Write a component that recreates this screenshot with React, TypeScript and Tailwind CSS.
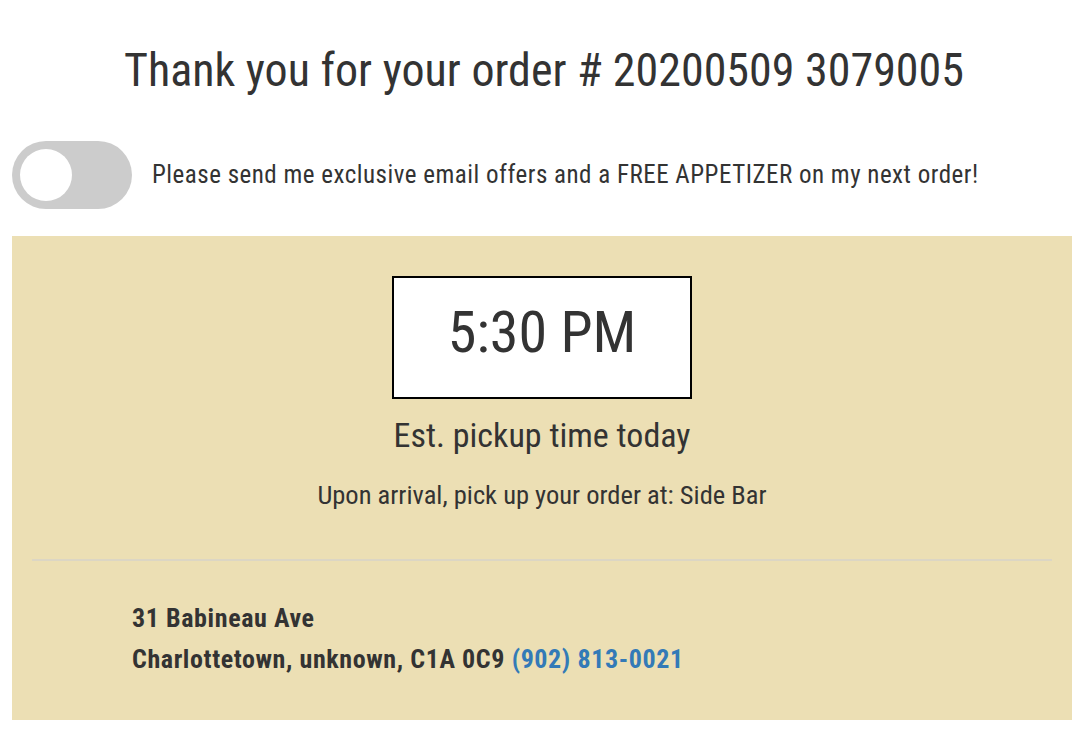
import React from "react";

const font = {
  fontFamily: '"Roboto Condensed", "DejaVu Sans Condensed", sans-serif',
};

export default function App() {
  const [optIn, setOptIn] = React.useState(false);

  return (
    <div className="w-[1088px] h-[754px] bg-white text-[#333]" style={font}>
      <h1 className="pt-[40px] text-center text-[46px] leading-[60px]">
        Thank you for your order # 20200509 3079005
      </h1>

      {/* email opt-in */}
      <div className="mt-[41px] flex items-center gap-[20px] pl-[12px]">
        <button
          onClick={() => setOptIn(!optIn)}
          className={`flex h-[68px] w-[120px] items-center rounded-full px-[8px] ${
            optIn ? "justify-end bg-[#337ab7]" : "justify-start bg-[#cccccc]"
          }`}
        >
          <span className="block h-[52px] w-[52px] rounded-full bg-white" />
        </button>
        <span className="text-[25px] tracking-[0.5px]">
          Please send me exclusive email offers and a FREE APPETIZER on my next order!
        </span>
      </div>

      {/* pickup panel */}
      <div className="ml-[12px] mt-[27px] h-[484px] w-[1060px] bg-[#ecdfb4] px-[20px] pt-[40px]">
        <div className="flex flex-col items-center">
          <div className="flex h-[123px] w-[300px] items-center justify-center border-2 border-black bg-white pb-[12px]">
            <span className="text-[58px] leading-none">5:30 PM</span>
          </div>
          <div className="mt-[16px] text-[34px] leading-[40px]">Est. pickup time today</div>
          <div className="mt-[25px] text-[26.5px] leading-[30px]">
            Upon arrival, pick up your order at: Side Bar
          </div>
        </div>

        <div className="mt-[49px] h-[2px] bg-[#dcd6c4]" />

        <div className="pl-[100px] pt-[37px] text-[26px] font-bold leading-[41px] tracking-[0.6px]">
          <div>31 Babineau Ave</div>
          <div>
            Charlottetown, unknown, C1A 0C9{" "}
            <a href="#" className="text-[#337ab7]">
              (902) 813-0021
            </a>
          </div>
        </div>
      </div>
    </div>
  );
}
